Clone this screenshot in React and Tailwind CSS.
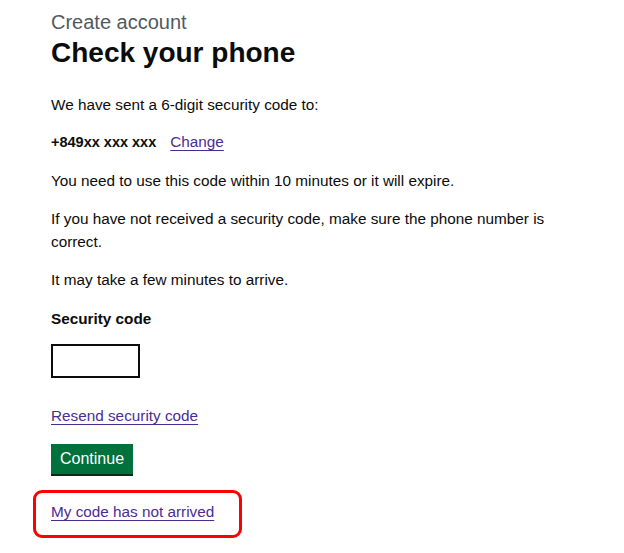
export default function App() {
  const link =
    'text-[#4c2c92] underline decoration-1 underline-offset-[3px] decoration-[#4c2c92]';

  return (
    <div className="min-h-screen bg-white font-['Liberation_Sans',Arial,sans-serif] text-[#0b0c0c]">
      <div className="pl-[51px] pt-[10px]">
        <span className="block text-[20px] leading-[24px] text-[#505a5f]">Create account</span>
        <h1 className="mt-[3px] text-[28px] leading-[32px] font-bold">Check your phone</h1>

        <p className="mt-[25px] text-[15.3px] leading-[21px]">
          We have sent a 6-digit security code to:
        </p>

        <p className="mt-[16px] flex items-baseline text-[15.3px] leading-[21px]">
          <span className="text-[14.5px] font-bold">+849xx xxx xxx</span>
          <a href="#" className={`ml-[14px] ${link}`}>
            Change
          </a>
        </p>

        <p className="mt-[17px] text-[15.3px] leading-[21px]">
          You need to use this code within 10 minutes or it will expire.
        </p>

        <p className="mt-[16px] w-[520px] text-[15.3px] leading-[23px]">
          If you have not received a security code, make sure the phone number is correct.
        </p>

        <p className="mt-[16px] text-[15.3px] leading-[21px]">It may take a few minutes to arrive.</p>

        <form className="mt-[18px]" onSubmit={(e) => e.preventDefault()}>
          <label htmlFor="code" className="block text-[15.3px] leading-[21px] font-bold">
            Security code
          </label>
          <input
            id="code"
            type="text"
            inputMode="numeric"
            className="mt-[15px] block h-[34px] w-[89px] border-2 border-[#0b0c0c] bg-white outline-none"
          />

          <a href="#" className={`mt-[27px] block w-fit text-[15.3px] leading-[21px] ${link}`}>
            Resend security code
          </a>

          <button
            type="submit"
            className="mt-[18px] flex h-[30px] items-center bg-[#00703c] px-[9px] text-[16px] leading-[20px] text-white shadow-[0_2px_0_#002d18]"
          >
            Continue
          </button>
        </form>

        <div className="mt-[16px] -ml-[18px] w-[209px] rounded-[9px] border-[3px] border-[#ff0000] pt-[8px] pb-[13px] pl-[15px]">
          <a href="#" className={`block w-fit text-[15.3px] leading-[21px] ${link}`}>
            My code has not arrived
          </a>
        </div>
      </div>
    </div>
  );
}
